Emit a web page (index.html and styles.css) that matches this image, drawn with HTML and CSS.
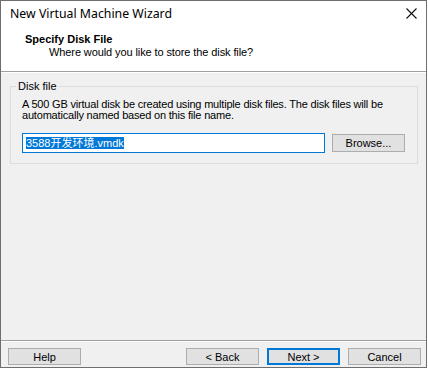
FILE: index.html
```html
<!DOCTYPE html>
<html lang="en">
<head>
    <meta charset="UTF-8">
    <meta name="viewport" content="width=device-width, initial-scale=1.0">
    <title>New Virtual Machine Wizard</title>
    <link rel="stylesheet" href="styles.css">
</head>
<body>
    <div class="window">
        <div class="titlebar">
            <span class="title">New Virtual Machine Wizard</span>
            <span class="close">
                <svg width="11" height="11" viewBox="0 0 11 11">
                    <path d="M0.5 0.5 L10.5 10.5 M10.5 0.5 L0.5 10.5" stroke="#111" stroke-width="1.1" fill="none"/>
                </svg>
            </span>
        </div>
        <div class="header">
            <div class="heading">Specify Disk File</div>
            <div class="subheading">Where would you like to store the disk file?</div>
        </div>
        <div class="content">
            <fieldset class="group">
                <legend>Disk file</legend>
                <p class="desc">A 500 GB virtual disk be created using multiple disk files. The disk files will be<br>automatically named based on this file name.</p>
                <div class="file-row">
                    <div class="file-input"><span class="selected">3588开发环境.vmdk</span></div>
                    <button class="btn browse">Browse...</button>
                </div>
            </fieldset>
        </div>
        <div class="footer">
            <button class="btn">Help</button>
            <div class="nav">
                <button class="btn">&lt; Back</button>
                <button class="btn default">Next &gt;</button>
                <button class="btn">Cancel</button>
            </div>
        </div>
    </div>
</body>
</html>
```

FILE: styles.css
```css
body {
    margin: 0;
    background: #ffffff;
    font-family: "Liberation Sans", Arial, sans-serif;
    font-size: 11px;
    color: #000;
}
.window {
    width: 425px;
    height: 366px;
    border: 1px solid #6e6e6e;
    background: #f0f0f0;
    display: flex;
    flex-direction: column;
}
.titlebar {
    height: 30px;
    background: #fff;
    display: flex;
    align-items: center;
    justify-content: space-between;
    padding: 0 9px 6px 9px;
    box-sizing: border-box;
}
.title {
    font-family: "Noto Sans", sans-serif;
    font-size: 12.3px;
}
.close {
    display: flex;
}
.header {
    height: 41px;
    background: #fff;
    border-bottom: 1px solid #a0a0a0;
    box-shadow: 0 1px 0 #fff;
    padding-top: 2px;
    box-sizing: border-box;
}
.heading {
    font-weight: bold;
    line-height: 13px;
    padding-left: 24px;
}
.subheading {
    line-height: 13px;
    padding-left: 48px;
    letter-spacing: -0.1px;
}
.content {
    flex: 1;
    padding: 8px 8px 0 9px;
}
.group {
    margin: 0;
    border: 1px solid #dcdcdc;
    padding: 6px 12px 10px 11px;
}
.group legend {
    padding: 0 2px;
    margin-left: -6px;
    line-height: 13px;
}
.desc {
    margin: 0;
    line-height: 11px;
    letter-spacing: -0.19px;
}
.file-row {
    display: flex;
    align-items: center;
    gap: 7px;
    margin-top: 12px;
}
.file-input {
    flex: 1;
    height: 18px;
    border: 1px solid #0078d7;
    background: #fff;
    display: flex;
    align-items: center;
    padding-left: 3px;
}
.selected {
    background: #0078d7;
    color: #fff;
    line-height: 12px;
    font-family: "Liberation Sans", "Noto Sans CJK SC", sans-serif;
}
.btn {
    width: 73px;
    height: 17px;
    padding: 0;
    background: #e1e1e1;
    border: 1px solid #adadad;
    font-family: "Liberation Sans", Arial, sans-serif;
    font-size: 11px;
    color: #000;
}
.browse {
    height: 18px;
}
.default {
    border-color: #0078d7;
    box-shadow: inset 0 0 0 1px #0078d7;
}
.footer {
    height: 27px;
    border-top: 1px solid #a0a0a0;
    box-shadow: inset 0 1px 0 #fff;
    display: flex;
    justify-content: space-between;
    padding: 7px 5px 0 7px;
    box-sizing: border-box;
}
.nav {
    display: flex;
    gap: 8px;
}
```
